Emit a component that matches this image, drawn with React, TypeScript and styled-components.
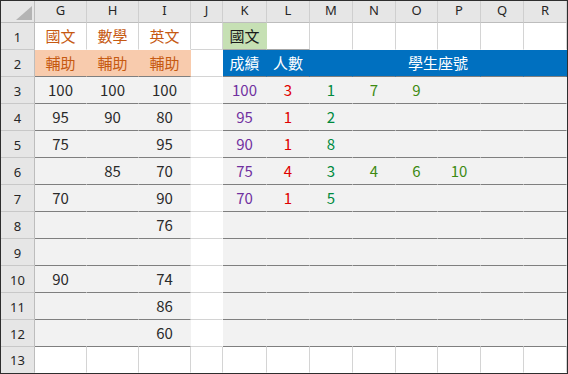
import React from "react";
import styled, { createGlobalStyle } from "styled-components";

/** Column layout of the visible part of the sheet */
const COLUMNS = ["G", "H", "I", "J", "K", "L", "M", "N", "O", "P", "Q", "R"];
const WIDTHS = [52, 52, 52, 32, 44, 43, 43, 43, 42, 43, 43, 43];

const LEFT = ["G", "H", "I"];
const RIGHT = ["K", "L", "M", "N", "O", "P", "Q", "R"];

const GRID = "#d4d4d4";
const RULE = "#7f7f7f";
const SHADE = "#f2f2f2";
const PEACH = "#f8cbad";
const BLUE = "#0070c0";
const ORANGE = "#c65911";

type Values = Record<string, string>;

const rows: Values[] = [
  { G: "國文", H: "數學", I: "英文", K: "國文" },
  { G: "輔助", H: "輔助", I: "輔助", K: "成績", L: "人數", O: "學生座號" },
  { G: "100", H: "100", I: "100", K: "100", L: "3", M: "1", N: "7", O: "9" },
  { G: "95", H: "90", I: "80", K: "95", L: "1", M: "2" },
  { G: "75", I: "95", K: "90", L: "1", M: "8" },
  { H: "85", I: "70", K: "75", L: "4", M: "3", N: "4", O: "6", P: "10" },
  { G: "70", I: "90", K: "70", L: "1", M: "5" },
  { I: "76" },
  {},
  { G: "90", I: "74" },
  { I: "86" },
  { I: "60" },
  {},
];

const fillOf = (row: number, col: string): string | null => {
  if (row === 1) return col === "K" ? "#c6e0b4" : null;
  if (row === 2) {
    if (LEFT.includes(col)) return PEACH;
    if (RIGHT.includes(col)) return BLUE;
    return null;
  }
  if (row >= 3 && row <= 12 && col !== "J") return SHADE;
  return null;
};

const colorOf = (row: number, col: string): string => {
  if (row <= 2 && LEFT.includes(col)) return ORANGE;
  if (row === 2 && RIGHT.includes(col)) return "#ffffff";
  if (row === 1) return "#1a1a1a";
  switch (col) {
    case "K":
      return "#7030a0";
    case "L":
      return "#e00000";
    case "M":
      return "#008a3e";
    case "N":
    case "O":
    case "P":
      return "#3d8a12";
    default:
      return "#2a2a2a";
  }
};

const bottomOf = (row: number, col: string, fill: string | null): string => {
  if (row === 13) return "transparent";
  if (fill && row >= 2) return RULE;
  if (row === 1) {
    if (col === "J") return GRID;
    if (col === "K" || col === "L") return "#a6a6a6";
    return "transparent";
  }
  return GRID;
};

const rightOf = (row: number, col: string, fill: string | null): string => {
  if (fill) return "transparent";
  if (col === "J" && row >= 2 && row <= 12) return "transparent";
  return GRID;
};

const App = (): JSX.Element => (
  <>
    <GlobalStyle />
    <Sheet>
      <Corner>
        <svg width="16" height="14" viewBox="0 0 16 14">
          <polygon points="16,0 16,14 0,14" fill="#b4b4b4" />
        </svg>
      </Corner>
      {COLUMNS.map((col) => (
        <ColumnHead key={col}>{col}</ColumnHead>
      ))}

      {rows.map((values, index) => {
        const row = index + 1;
        return (
          <React.Fragment key={row}>
            <RowHead $last={row === 13}>{row}</RowHead>
            {COLUMNS.map((col) => {
              if (row === 2 && col === "P") return null;
              const fill = fillOf(row, col);
              return (
                <Cell
                  key={col}
                  $fill={fill ?? "#ffffff"}
                  $color={colorOf(row, col)}
                  $bottom={bottomOf(row, col, fill)}
                  $right={rightOf(row, col, fill)}
                  $span={row === 2 && col === "O" ? 2 : 1}
                >
                  {values[col] ?? ""}
                </Cell>
              );
            })}
          </React.Fragment>
        );
      })}
    </Sheet>
  </>
);

/**
 * Styles
 */
const GlobalStyle = createGlobalStyle`
  html, body {
    margin: 0;
    padding: 0;
    background: #ffffff;
    overflow: hidden;
  }
`;

const Sheet = styled.div`
  display: grid;
  grid-template-columns: 34px ${WIDTHS.map((w) => `${w}px`).join(" ")};
  grid-template-rows: 22px repeat(12, 27px) 26px;

  width: 568px;
  height: 374px;
  box-sizing: border-box;

  border: 1px solid #2e2e2e;
  background: #ffffff;
  font-family: "Noto Sans CJK TC", "Noto Sans", sans-serif;
`;

const Corner = styled.div`
  display: flex;
  align-items: flex-end;
  justify-content: flex-end;

  padding: 0 2px 2px 0;
  box-sizing: border-box;

  background: #e6e6e6;
  border-right: 1px solid #bdbdbd;
  border-bottom: 1px solid #bdbdbd;
`;

const ColumnHead = styled.div`
  display: flex;
  align-items: center;
  justify-content: center;

  box-sizing: border-box;
  padding-bottom: 3px;

  background: #e6e6e6;
  border-right: 1px solid #cfcfcf;
  border-bottom: 1px solid #bdbdbd;

  color: #262626;
  font-family: "Noto Sans", sans-serif;
  font-size: 13px;
`;

const RowHead = styled.div<{ $last: boolean }>`
  display: flex;
  align-items: flex-end;
  justify-content: center;

  box-sizing: border-box;
  padding-bottom: 3px;

  background: #e6e6e6;
  border-right: 1px solid #bdbdbd;
  border-bottom: 1px solid ${({ $last }) => ($last ? "transparent" : "#c8c8c8")};

  color: #262626;
  font-family: "Noto Sans", sans-serif;
  font-size: 13px;
  line-height: 18px;
`;

const Cell = styled.div<{
  $fill: string;
  $color: string;
  $bottom: string;
  $right: string;
  $span: number;
}>`
  grid-column: span ${({ $span }) => $span};

  display: flex;
  align-items: center;
  justify-content: center;

  box-sizing: border-box;
  padding-bottom: 2px;

  background: ${({ $fill }) => $fill};
  border-right: 1px solid ${({ $right }) => $right};
  border-bottom: 1px solid ${({ $bottom }) => $bottom};

  color: ${({ $color }) => $color};
  font-size: 15px;
  white-space: nowrap;
`;

/** exporting */
export default App;
